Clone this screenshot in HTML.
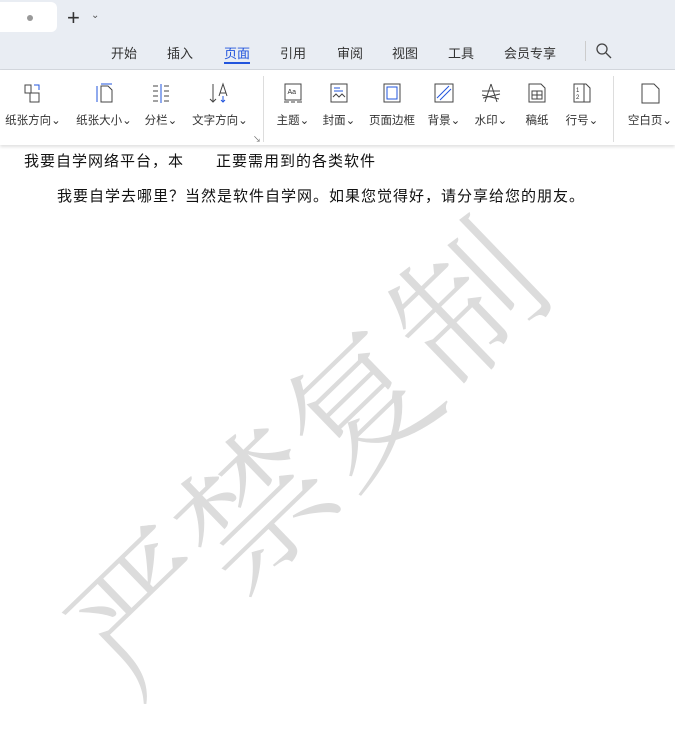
<!DOCTYPE html>
<html><head><meta charset="utf-8"><style>
*{margin:0;padding:0;box-sizing:border-box}
body{width:675px;height:720px;overflow:hidden;background:#fff;font-family:"Liberation Sans","Noto Sans CJK SC",sans-serif;position:relative;color:#222}
.top{position:absolute;left:0;top:0;width:675px;height:70px;background:#e9edf3;border-bottom:1px solid #d4d8de}
.tab{position:absolute;left:-10px;top:2px;width:67px;height:30px;background:#fff;border-radius:6px}
.dot{position:absolute;left:37px;top:13px;width:6px;height:6px;border-radius:50%;background:#999}
.menu{position:absolute;top:43px;font-size:13px;color:#333}
.bar{position:absolute;left:0;top:70px;width:675px;height:75px;background:#fff;box-shadow:0 2px 3px rgba(0,0,0,.12)}
.it{position:absolute;top:0;text-align:center;font-size:11.5px;color:#333;white-space:nowrap}
.it svg{display:block;margin:12px auto 0;width:22px;height:22px}
.it span{display:block;margin-top:8px}
.sep{position:absolute;top:6px;width:1px;height:66px;background:#ddd}
.wm{position:absolute;left:2px;top:335px;font-family:"Noto Serif CJK SC",serif;font-size:146px;color:#dcdcdc;transform:rotate(-44deg);transform-origin:center;white-space:nowrap;width:620px;letter-spacing:2px;font-weight:300}
.doc{position:absolute;font-size:15px;color:#111;white-space:nowrap;letter-spacing:1px}
</style></head><body>
<div class="top">
<div class="tab"><div class="dot"></div></div>
<div style="position:absolute;left:67px;top:5px;font-size:22px;color:#333">+</div>
<div style="position:absolute;left:91px;top:10px;font-size:10px;color:#555">⌄</div>
<div class="menu" style="left:111px">开始</div>
<div class="menu" style="left:167px">插入</div>
<div class="menu" style="left:224px;color:#2255dd">页面</div>
<div style="position:absolute;left:224px;top:62px;width:26px;height:2px;background:#2255dd"></div>
<div class="menu" style="left:280px">引用</div>
<div class="menu" style="left:337px">审阅</div>
<div class="menu" style="left:392px">视图</div>
<div class="menu" style="left:448px">工具</div>
<div class="menu" style="left:504px">会员专享</div>
<div style="position:absolute;left:585px;top:41px;width:1px;height:20px;background:#ccc"></div>
<svg style="position:absolute;left:595px;top:42px" width="18" height="18" viewBox="0 0 18 18"><circle cx="7" cy="7" r="5" fill="none" stroke="#444" stroke-width="1.3"/><path d="M11 11l5 5" stroke="#444" stroke-width="1.3"/></svg>
</div>
<div class="bar">
<div class="it" style="left:4px;width:58px"><svg viewBox="0 0 22 22" fill="none" stroke="#444"><path d="M3 3h6v8h-6z M8 11h9v9H8z"/><path d="M12 3h5v5" stroke="#2255dd"/></svg><span>纸张方向⌄</span></div>
<div class="it" style="left:74px;width:60px"><svg viewBox="0 0 22 22" fill="none" stroke="#444"><path d="M8 4h7l4 4v12H8z"/><path d="M4 4v16M8 2h11" stroke="#2255dd"/></svg><span>纸张大小⌄</span></div>
<div class="it" style="left:143px;width:36px"><svg viewBox="0 0 22 22" fill="none" stroke="#444"><path d="M3 4h5M3 9h5M3 14h5M3 19h5M14 4h5M14 9h5M14 14h5M14 19h5"/><path d="M11 2v19" stroke="#2255dd"/></svg><span>分栏⌄</span></div>
<div class="it" style="left:190px;width:60px"><svg viewBox="0 0 22 22" fill="none" stroke="#444"><path d="M4 2v18M1 17l3 3 3-3M10 14l4-12 4 12M11 11h6"/><path d="M14 14v6M12 18l2 2 2-2" stroke="#2255dd"/></svg><span>文字方向⌄</span></div>
<div style="position:absolute;left:253px;top:64px;font-size:8px;color:#666">↘</div>
<div class="sep" style="left:263px"></div>
<div class="it" style="left:274px;width:38px"><svg viewBox="0 0 22 22" fill="none" stroke="#444"><path d="M3 2h16v16H3z"/><text x="5.5" y="12" font-size="7" fill="#333" stroke="none">Aa</text><path d="M2 20h5M9 20h4M15 20h5"/></svg><span>主题⌄</span></div>
<div class="it" style="left:320px;width:38px"><svg viewBox="0 0 22 22" fill="none" stroke="#444"><path d="M3 2h16v18H3z M5 15l3-3 3 3 3-3 3 3"/><path d="M6 6h6M6 9h9" stroke="#2255dd"/></svg><span>封面⌄</span></div>
<div class="it" style="left:366px;width:52px"><svg viewBox="0 0 22 22" fill="none" stroke="#444"><path d="M3 2h16v18H3z"/><path d="M6 5h10v12H6z" stroke="#2255dd"/></svg><span>页面边框</span></div>
<div class="it" style="left:425px;width:38px"><svg viewBox="0 0 22 22" fill="none" stroke="#444"><path d="M2 2h18v18H2z"/><path d="M4 16L16 4M7 18L18 7" stroke="#2255dd"/></svg><span>背景⌄</span></div>
<div class="it" style="left:472px;width:38px"><svg viewBox="0 0 22 22" fill="none" stroke="#444"><path d="M11 2l-6 18M11 2l6 18M2 9h18M3 16l17-4M2 13l17 4"/></svg><span>水印⌄</span></div>
<div class="it" style="left:522px;width:30px"><svg viewBox="0 0 22 22" fill="none" stroke="#444"><path d="M3 2h12l4 4v14H3z M6 9h10v8H6z M6 13h10M11 9v8"/></svg><span>稿纸</span></div>
<div class="it" style="left:563px;width:38px"><svg viewBox="0 0 22 22" fill="none" stroke="#444"><path d="M3 2h12l4 4v14H3z M13 2v18"/><text x="5" y="10" font-size="6" fill="#333" stroke="none">1</text><text x="5" y="17" font-size="6" fill="#333" stroke="none">2</text></svg><span>行号⌄</span></div>
<div class="sep" style="left:613px"></div>
<div class="it" style="left:624px;width:52px"><svg viewBox="0 0 22 22" fill="none" stroke="#444"><path d="M3 2h12l5 5v14H3z"/></svg><span>空白页⌄</span></div>
</div>
<div class="doc" style="left:24px;top:150px">我要自学网络平台，本<span style="display:inline-block;width:32px"></span>正要需用到的各类软件</div>
<div class="doc" style="left:57px;top:185px">我要自学去哪里？当然是软件自学网。如果您觉得好，请分享给您的朋友。</div>
<div class="wm">严禁复制</div>
</body></html>
